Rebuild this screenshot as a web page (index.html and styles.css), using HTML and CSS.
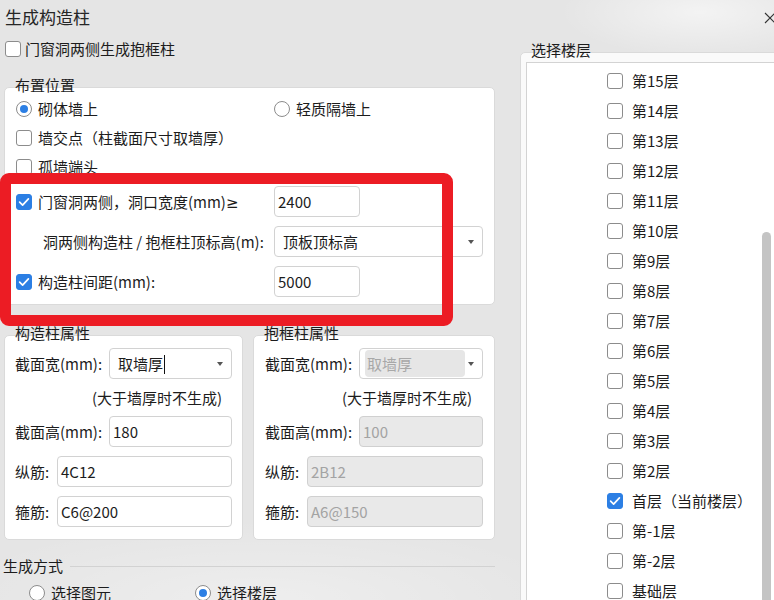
FILE: index.html
```html
<!DOCTYPE html>
<html lang="zh-CN">
<head>
<meta charset="utf-8">
<title>生成构造柱</title>
<link rel="stylesheet" href="styles.css">
</head>
<body>
<div class="window">
  <div class="titlebar">
    <div class="title">生成构造柱</div>
    <svg class="close" width="12" height="12" viewBox="0 0 12 12"><path d="M1 1L11 11M11 1L1 11" stroke="#333" stroke-width="1.1" fill="none"/></svg>
  </div>
  <div class="main">
    <div class="left">
      <label class="item top-chk"><span class="cb"></span>门窗洞两侧生成抱框柱</label>

      <div class="group layout">
        <div class="g-label">布置位置</div>
        <div class="g-box lbox">
          <div class="lrow h29">
            <label class="item c1"><span class="rb on"></span>砌体墙上</label>
            <label class="item"><span class="rb"></span>轻质隔墙上</label>
          </div>
          <div class="lrow h29"><label class="item"><span class="cb"></span>墙交点（柱截面尺寸取墙厚）</label></div>
          <div class="lrow h29"><label class="item"><span class="cb"></span>孤墙端头</label></div>
          <div class="lrow h31 mt5">
            <label class="item c1"><span class="cb on"><svg width="16" height="16" viewBox="0 0 16 16"><path d="M3.6 8.2L6.6 11.1L12.4 4.9" stroke="#fff" stroke-width="1.7" fill="none" stroke-linecap="round" stroke-linejoin="round"/></svg></span><span>门窗洞两侧，洞口宽度(mm)<span class="ge">≥</span></span></label>
            <div class="inp w86">2400</div>
          </div>
          <div class="lrow h31 mt9">
            <span class="c1 indent">洞两侧构造柱 / 抱框柱顶标高(m):</span>
            <div class="sel w209"><span class="sel-text">顶板顶标高</span><span class="arrow"></span></div>
          </div>
          <div class="lrow h31 mt9">
            <label class="item c1"><span class="cb on"><svg width="16" height="16" viewBox="0 0 16 16"><path d="M3.6 8.2L6.6 11.1L12.4 4.9" stroke="#fff" stroke-width="1.7" fill="none" stroke-linecap="round" stroke-linejoin="round"/></svg></span>构造柱间距(mm):</label>
            <div class="inp w86">5000</div>
          </div>
        </div>
      </div>

      <div class="props">
        <div class="group pg-left">
          <div class="g-label">构造柱属性</div>
          <div class="g-box pbox">
            <div class="prow"><span class="plab w94">截面宽(mm):</span><div class="sel grow"><span class="sel-text">取墙厚<span class="cursor"></span></span><span class="arrow"></span></div></div>
            <div class="note">(大于墙厚时不生成)</div>
            <div class="prow"><span class="plab w94">截面高(mm):</span><div class="inp grow">180</div></div>
            <div class="prow mt9"><span class="plab w42">纵筋:</span><div class="inp grow">4C12</div></div>
            <div class="prow mt9"><span class="plab w42">箍筋:</span><div class="inp grow">C6@200</div></div>
          </div>
        </div>
        <div class="group pg-right">
          <div class="g-label">抱框柱属性</div>
          <div class="g-box pbox pbox-r">
            <div class="prow"><span class="plab w94">截面宽(mm):</span><div class="sel grow dis-sel"><span class="dis-inner">取墙厚</span><span class="arrow"></span></div></div>
            <div class="note">(大于墙厚时不生成)</div>
            <div class="prow"><span class="plab w94">截面高(mm):</span><div class="inp grow dis">100</div></div>
            <div class="prow mt9"><span class="plab w42">纵筋:</span><div class="inp grow dis">2B12</div></div>
            <div class="prow mt9"><span class="plab w42">箍筋:</span><div class="inp grow dis">A6@150</div></div>
          </div>
        </div>
      </div>

      <div class="mode-head"><span>生成方式</span><span class="mode-line"></span></div>
      <div class="mode-row">
        <label class="item w166"><span class="rb"></span>选择图元</label>
        <label class="item"><span class="rb on"></span>选择楼层</label>
      </div>
    </div>

    <div class="right">
      <div class="group">
        <div class="g-label">选择楼层</div>
        <div class="g-box fbox">
          <div class="flist">
            <label class="frow"><span class="cb"></span>第15层</label>
            <label class="frow"><span class="cb"></span>第14层</label>
            <label class="frow"><span class="cb"></span>第13层</label>
            <label class="frow"><span class="cb"></span>第12层</label>
            <label class="frow"><span class="cb"></span>第11层</label>
            <label class="frow"><span class="cb"></span>第10层</label>
            <label class="frow"><span class="cb"></span>第9层</label>
            <label class="frow"><span class="cb"></span>第8层</label>
            <label class="frow"><span class="cb"></span>第7层</label>
            <label class="frow"><span class="cb"></span>第6层</label>
            <label class="frow"><span class="cb"></span>第5层</label>
            <label class="frow"><span class="cb"></span>第4层</label>
            <label class="frow"><span class="cb"></span>第3层</label>
            <label class="frow"><span class="cb"></span>第2层</label>
            <label class="frow"><span class="cb on"><svg width="16" height="16" viewBox="0 0 16 16"><path d="M3.6 8.2L6.6 11.1L12.4 4.9" stroke="#fff" stroke-width="1.7" fill="none" stroke-linecap="round" stroke-linejoin="round"/></svg></span>首层（当前楼层）</label>
            <label class="frow"><span class="cb"></span>第-1层</label>
            <label class="frow"><span class="cb"></span>第-2层</label>
            <label class="frow"><span class="cb"></span>基础层</label>
          </div>
        </div>
      </div>
      <div class="thumb"></div>
    </div>
  </div>
  <div class="annot"></div>
</div>
</body>
</html>
```
FILE: styles.css
```css
* { box-sizing: border-box; }
html, body { margin: 0; padding: 0; }
body {
  width: 774px;
  height: 600px;
  overflow: hidden;
  font-family: "Noto Sans CJK SC", "Noto Sans", sans-serif;
  font-size: 15px;
  line-height: 20px;
  color: #1c1c1c;
  background:
    radial-gradient(ellipse 140px 45px at 700px 12px, rgba(255,255,255,0.55), rgba(255,255,255,0) 100%),
    radial-gradient(ellipse 320px 80px at 260px 600px, rgba(255,255,255,0.35), rgba(255,255,255,0) 100%),
    #e5e5e5;
}
.window { position: relative; width: 774px; height: 600px; }

.titlebar { height: 34px; display: flex; align-items: center; justify-content: space-between; }
.title { padding-left: 5px; font-size: 17px; line-height: 34px; color: #262626; }
.close { margin-right: -2px; margin-top: 1px; }

.main { display: flex; gap: 20px; }
.left { width: 500px; flex: none; display: flex; flex-direction: column; }
.right { width: 254px; flex: none; position: relative; overflow: hidden; height: 566px; padding-top: 6px; }

.item { display: flex; align-items: center; gap: 6px; }
.top-chk { margin-top: 7px; height: 16px; padding-left: 5px; gap: 4px; }
.ge { font-family: "Noto Sans", "DejaVu Sans", sans-serif; }

.cb {
  width: 16px; height: 16px; flex: none;
  border: 1px solid #8c8c8c; border-radius: 3px; background: #fff;
  display: flex; align-items: center; justify-content: center;
}
.cb.on { background: #2c7fe4; border-color: #2c7fe4; }
.cb svg { display: block; margin: -1px; }
.rb {
  width: 16px; height: 16px; flex: none;
  border: 1px solid #8c8c8c; border-radius: 50%; background: #fff;
  display: flex; align-items: center; justify-content: center;
}
.rb.on::after { content: ""; width: 8px; height: 8px; border-radius: 50%; background: #2c7fe4; }

.group { display: flex; flex-direction: column; }
.g-label { position: relative; z-index: 1; height: 20px; line-height: 20px; padding-left: 11px; }
.g-box {
  margin-top: -8px;
  background: #fff;
  border: 1px solid #dadada;
  border-radius: 5px;
}

.layout { margin-top: 18px; margin-left: 4px; width: 491px; }
.lbox { padding: 6px 11px 7px 11px; }
.lrow { display: flex; align-items: center; }
.h29 { height: 29px; }
.h31 { height: 31px; }
.mt5 { margin-top: 5px; }
.mt9 { margin-top: 9px; }
.c1 { width: 258px; flex: none; }
.indent { padding-left: 27px; }

.inp {
  height: 31px; line-height: 29px;
  border: 1px solid #d2d2d2; border-radius: 4px; background: #fff;
  padding-left: 3px; color: #1c1c1c;
}
.inp.dis { background: #e9e9e9; color: #a3a3a3; border-color: #d0d0d0; }
.w86 { width: 86px; }
.w209 { width: 209px; }
.grow { flex: 1; }
.sel {
  height: 31px; line-height: 29px;
  border: 1px solid #d2d2d2; border-radius: 4px; background: #fff;
  padding: 0 8px 0 8px;
  display: flex; align-items: center; justify-content: space-between;
}
.arrow { width: 0; height: 0; border-left: 3px solid transparent; border-right: 3px solid transparent; border-top: 4px solid #555; }
.cursor { display: inline-block; width: 1px; height: 19px; background: #111; vertical-align: -4px; margin-left: 1px; }
.dis-sel { padding-left: 5px; }
.dis-inner {
  width: 100px; height: 27px; line-height: 27px;
  background: #e6e6e6; border-radius: 4px; color: #a8a8a8; padding-left: 2px;
}

.props { display: flex; gap: 10px; margin-top: 18px; padding-left: 4px; }
.pg-left { width: 239px; }
.pg-right { width: 242px; }
.pbox { padding: 12px 10px 12px 10px; }
.pbox-r { padding-left: 11px; padding-right: 11px; }
.prow { display: flex; align-items: center; height: 31px; }
.plab { flex: none; }
.w94 { width: 94px; }
.w42 { width: 42px; }
.note { height: 37px; line-height: 37px; padding-left: 77px; }

.mode-head { display: flex; align-items: center; height: 20px; margin-top: 16px; padding-left: 3px; padding-right: 5px; }
.mode-line { flex: 1; height: 1px; background: #d2d2d2; margin-left: 7px; }
.mode-row { display: flex; align-items: center; height: 20px; margin-top: 7px; padding-left: 29px; }
.w166 { width: 166px; flex: none; }

.fbox { width: 270px; height: 560px; padding: 9px 0 0 5px; background: #fafafa; }
.flist { height: 560px; background: #fff; border: 1px solid #d3d3d3; border-right: none; padding: 3px 0 0 80px; }
.frow { display: flex; align-items: center; gap: 9px; height: 30px; }

.thumb {
  position: absolute; left: 242px; top: 198px;
  width: 9px; height: 420px; border-radius: 5px; background: #c4c4c4;
}

.annot {
  position: absolute; left: 0; top: 173px;
  width: 453px; height: 153px;
  border: 11px solid #ec1c24; border-radius: 9px;
  pointer-events: none;
}
```
